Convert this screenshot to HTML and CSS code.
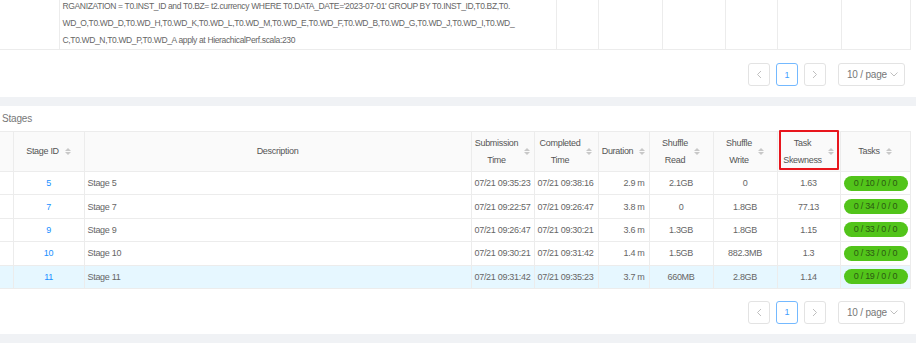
FILE: index.html
```html
<!DOCTYPE html>
<html lang="en">
<head>
<meta charset="utf-8">
<title>Stages</title>
<link rel="stylesheet" href="styles.css">
</head>
<body>
<section class="card card-top">
  <div class="clip">
    <table class="tbl tbl-top">
      <colgroup>
        <col class="t0"><col class="t1"><col class="t2"><col class="t3"><col class="t4"><col class="t5"><col class="t6"><col class="t7">
      </colgroup>
      <tbody>
        <tr>
          <td></td>
          <td class="sql">RGANIZATION = T0.INST_ID and T0.BZ= t2.currency WHERE T0.DATA_DATE='2023-07-01' GROUP BY T0.INST_ID,T0.BZ,T0.<br>WD_O,T0.WD_D,T0.WD_H,T0.WD_K,T0.WD_L,T0.WD_M,T0.WD_E,T0.WD_F,T0.WD_B,T0.WD_G,T0.WD_J,T0.WD_I,T0.WD_<br>C,T0.WD_N,T0.WD_P,T0.WD_A apply at HierachicalPerf.scala:230</td>
          <td></td><td></td><td></td><td></td><td></td><td></td>
        </tr>
      </tbody>
    </table>
  </div>
  <div class="pager">
    <span class="pg-btn"><svg width="6" height="9" viewBox="0 0 6 9"><path d="M5 1 1.5 4.5 5 8" fill="none" stroke="#bfbfbf" stroke-width="1"/></svg></span>
    <span class="pg-btn pg-active">1</span>
    <span class="pg-btn"><svg width="6" height="9" viewBox="0 0 6 9"><path d="M1 1 4.5 4.5 1 8" fill="none" stroke="#bfbfbf" stroke-width="1"/></svg></span>
    <span class="pg-size">10 / page<svg width="8" height="5" viewBox="0 0 8 5"><path d="M0.5 0.5 4 4 7.5 0.5" fill="none" stroke="#bfbfbf" stroke-width="1"/></svg></span>
  </div>
</section>

<section class="card card-stages">
  <div class="card-title">Stages</div>
  <table class="tbl tbl-stages">
    <colgroup>
      <col class="s0"><col class="s1"><col class="s2"><col class="s3"><col class="s4"><col class="s5"><col class="s6"><col class="s7"><col class="s8"><col class="s9">
    </colgroup>
    <thead>
      <tr>
        <th></th>
        <th><div class="th-in"><span class="th-t">Stage ID</span><span class="sorter"><i class="up"></i><i class="dn"></i></span></div></th>
        <th><div class="th-in"><span class="th-t">Description</span></div></th>
        <th><div class="th-in"><span class="th-t">Submission<br>Time</span><span class="sorter"><i class="up"></i><i class="dn"></i></span></div></th>
        <th><div class="th-in"><span class="th-t">Completed<br>Time</span><span class="sorter"><i class="up"></i><i class="dn"></i></span></div></th>
        <th><div class="th-in"><span class="th-t">Duration</span><span class="sorter"><i class="up"></i><i class="dn"></i></span></div></th>
        <th><div class="th-in"><span class="th-t">Shuffle<br>Read</span><span class="sorter"><i class="up"></i><i class="dn"></i></span></div></th>
        <th><div class="th-in"><span class="th-t">Shuffle<br>Write</span><span class="sorter"><i class="up"></i><i class="dn"></i></span></div></th>
        <th class="marked"><div class="th-in"><span class="th-t">Task<br>Skewness</span><span class="sorter"><i class="up"></i><i class="dn"></i></span></div></th>
        <th><div class="th-in"><span class="th-t">Tasks</span><span class="sorter"><i class="up"></i><i class="dn"></i></span></div></th>
      </tr>
    </thead>
    <tbody>
      <tr>
        <td></td><td class="ctr"><a class="lnk">5</a></td><td>Stage 5</td>
        <td>07/21 09:35:23</td><td>07/21 09:38:16</td><td class="rgt">2.9 m</td>
        <td class="ctr">2.1GB</td><td class="ctr">0</td><td class="ctr">1.63</td>
        <td class="ctr"><span class="badge">0 / 10 / 0 / 0</span></td>
      </tr>
      <tr>
        <td></td><td class="ctr"><a class="lnk">7</a></td><td>Stage 7</td>
        <td>07/21 09:22:57</td><td>07/21 09:26:47</td><td class="rgt">3.8 m</td>
        <td class="ctr">0</td><td class="ctr">1.8GB</td><td class="ctr">77.13</td>
        <td class="ctr"><span class="badge">0 / 34 / 0 / 0</span></td>
      </tr>
      <tr>
        <td></td><td class="ctr"><a class="lnk">9</a></td><td>Stage 9</td>
        <td>07/21 09:26:47</td><td>07/21 09:30:21</td><td class="rgt">3.6 m</td>
        <td class="ctr">1.3GB</td><td class="ctr">1.8GB</td><td class="ctr">1.15</td>
        <td class="ctr"><span class="badge">0 / 33 / 0 / 0</span></td>
      </tr>
      <tr>
        <td></td><td class="ctr"><a class="lnk">10</a></td><td>Stage 10</td>
        <td>07/21 09:30:21</td><td>07/21 09:31:42</td><td class="rgt">1.4 m</td>
        <td class="ctr">1.5GB</td><td class="ctr">882.3MB</td><td class="ctr">1.3</td>
        <td class="ctr"><span class="badge">0 / 33 / 0 / 0</span></td>
      </tr>
      <tr class="hover">
        <td></td><td class="ctr"><a class="lnk">11</a></td><td>Stage 11</td>
        <td>07/21 09:31:42</td><td>07/21 09:35:23</td><td class="rgt">3.7 m</td>
        <td class="ctr">660MB</td><td class="ctr">2.8GB</td><td class="ctr">1.14</td>
        <td class="ctr"><span class="badge">0 / 19 / 0 / 0</span></td>
      </tr>
    </tbody>
  </table>
  <div class="pager pager-b">
    <span class="pg-btn"><svg width="6" height="9" viewBox="0 0 6 9"><path d="M5 1 1.5 4.5 5 8" fill="none" stroke="#bfbfbf" stroke-width="1"/></svg></span>
    <span class="pg-btn pg-active">1</span>
    <span class="pg-btn"><svg width="6" height="9" viewBox="0 0 6 9"><path d="M1 1 4.5 4.5 1 8" fill="none" stroke="#bfbfbf" stroke-width="1"/></svg></span>
    <span class="pg-size">10 / page<svg width="8" height="5" viewBox="0 0 8 5"><path d="M0.5 0.5 4 4 7.5 0.5" fill="none" stroke="#bfbfbf" stroke-width="1"/></svg></span>
  </div>
</section>

<section class="card card-next"></section>
</body>
</html>
```
FILE: styles.css
```css
* { box-sizing: border-box; }
html, body {
  margin: 0;
  padding: 0;
  background: #f0f2f5;
  font-family: "Liberation Sans", Arial, sans-serif;
  font-size: 9px;
  letter-spacing: -0.3px;
  color: #666;
}
.card { background: #fff; }
.card-top { height: 97px; display: flex; flex-direction: column; }
.clip { height: 52px; overflow: hidden; }
.tbl {
  border-collapse: collapse;
  table-layout: fixed;
  width: 910px;
}
.tbl td, .tbl th {
  border: 1px solid #ececec;
  padding: 0 3px;
}
.tbl td { overflow: hidden; }
.tbl-top { margin-top: -2px; }
.tbl-top td { border-top: none; }
.tbl-top td:first-child, .tbl-stages td:first-child, .tbl-stages th:first-child { border-left: none; }
.t0 { width: 59px; } .t1 { width: 497px; } .t2 { width: 42px; } .t3 { width: 64px; }
.t4 { width: 63px; } .t5 { width: 52px; } .t6 { width: 64px; } .t7 { width: 69px; }
.sql {
  line-height: 17px;
  padding: 3px 3px 4px 3px;
  white-space: nowrap;
  font-size: 8.5px;
  letter-spacing: -0.35px;
  color: #666;
}

.pager {
  display: flex;
  justify-content: flex-end;
  align-items: center;
  gap: 6px;
  padding: 11px 11px 11px 0;
}
.pager-b { padding: 12px 11px 10px 0; }
.pg-btn {
  width: 22px;
  height: 23px;
  border: 1px solid #e3e3e3;
  border-radius: 3px;
  display: flex;
  align-items: center;
  justify-content: center;
  color: #999;
  font-size: 9px;
  letter-spacing: 0;
}
.pg-active { border-color: #74b9ff; color: #40a0ff; }
.pg-size {
  margin-left: 6px;
  width: 67px;
  height: 23px;
  border: 1px solid #e3e3e3;
  border-radius: 3px;
  display: flex;
  align-items: center;
  padding-left: 8px;
  gap: 3px;
  color: #777;
  font-size: 10px;
  letter-spacing: -0.2px;
}

.card-stages { margin-top: 9px; }
.card-title {
  height: 25px;
  line-height: 26px;
  padding-left: 2px;
  font-size: 10px;
  letter-spacing: -0.2px;
  color: #777;
}
.s0 { width: 13px; } .s1 { width: 71px; } .s2 { width: 387px; } .s3 { width: 63px; } .s4 { width: 64px; }
.s5 { width: 51px; } .s6 { width: 64px; } .s7 { width: 64px; } .s8 { width: 63px; } .s9 { width: 70px; }
.tbl-stages th {
  background: #fafafa;
  height: 40px;
  font-weight: normal;
  color: #555;
  position: relative;
  padding: 0 3px;
}
.th-in {
  display: flex;
  align-items: center;
  justify-content: center;
  gap: 6px;
}
.th-t { line-height: 17px; text-align: center; }
.sorter {
  display: flex;
  flex-direction: column;
  gap: 1px;
  flex: none;
}
.sorter i {
  display: block;
  width: 0;
  height: 0;
  border-left: 3px solid transparent;
  border-right: 3px solid transparent;
}
.sorter .up { border-bottom: 3px solid #c8c8c8; }
.sorter .dn { border-top: 3px solid #c8c8c8; }
.marked::after {
  content: "";
  position: absolute;
  left: 1px;
  right: 1px;
  top: -2px;
  bottom: 1px;
  border: 2px solid #e8161d;
  border-radius: 1px;
}
.tbl-stages td {
  height: 23.4px;
  white-space: nowrap;
  color: #666;
}
.tbl-stages tr.hover td { background: #e6f7ff; }
.ctr { text-align: center; }
.rgt { text-align: right; }
.tbl-stages td.rgt { padding-right: 4px; }
.lnk { color: #1890ff; text-decoration: none; }
.badge {
  display: inline-block;
  width: 64px;
  height: 15px;
  line-height: 15px;
  border-radius: 8px;
  background: #52c41a;
  color: #2c5a12;
  font-size: 9px;
  text-align: center;
}
.card-next { margin-top: 9px; height: 20px; }
```
